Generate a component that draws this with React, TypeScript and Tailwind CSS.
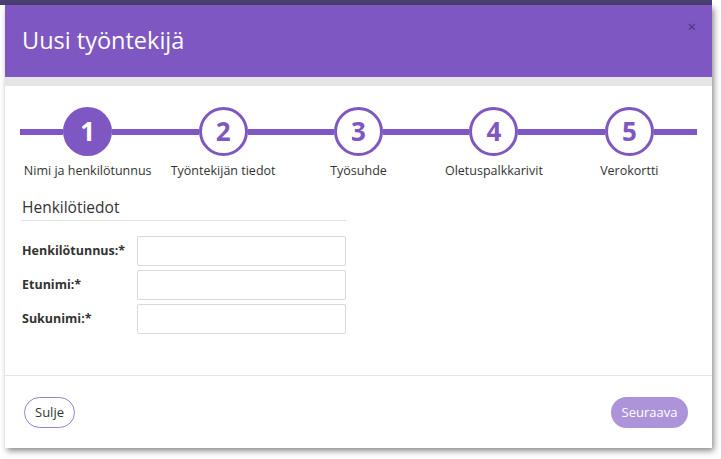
import React from "react";

const steps = [
  "Nimi ja henkilötunnus",
  "Työntekijän tiedot",
  "Työsuhde",
  "Oletuspalkkarivit",
  "Verokortti",
];

const fields = ["Henkilötunnus:*", "Etunimi:*", "Sukunimi:*"];

export default function App() {
  return (
    <div
      className="h-[459px] w-[721px] bg-white overflow-hidden"
      style={{ fontFamily: '"Open Sans", "Noto Sans", sans-serif' }}
    >
      <div className="h-[5px] w-[712px] bg-[#4b3f70]" />
      <div className="relative ml-[5px] w-[707px] bg-white shadow-[2px_3px_6px_rgba(0,0,0,0.45)]">
        {/* header */}
        <div className="flex h-[72px] items-center bg-[#7e57c2] px-[17px]">
          <h1 className="text-[23.5px] leading-none font-normal text-white">Uusi työntekijä</h1>
        </div>
        <button className="absolute right-[16px] top-[14px] text-[15px] leading-none text-[#4a2f7e]">
          ×
        </button>
        <div className="h-[9px] bg-[#e5e5e5]" />

        {/* body */}
        <div className="pt-[21px] pb-[41px]">
          <div className="flex px-[15px]">
            {steps.map((label, i) => (
              <div key={label} className="flex flex-1 flex-col items-center">
                <div className="flex w-full items-center">
                  <div className="h-[6px] flex-1 bg-[#7e57c2]" />
                  {i === 0 ? (
                    <div className="flex h-[49px] w-[49px] items-center justify-center rounded-full bg-[#7e57c2] text-[26px] font-bold text-white">
                      {i + 1}
                    </div>
                  ) : (
                    <div className="flex h-[49px] w-[49px] items-center justify-center rounded-full border-[3px] border-[#7e57c2] bg-white text-[26px] font-bold text-[#7e57c2]">
                      {i + 1}
                    </div>
                  )}
                  <div className="h-[6px] flex-1 bg-[#7e57c2]" />
                </div>
                <div className="mt-[6px] text-[12.5px] leading-[18px] text-[#333]">{label}</div>
              </div>
            ))}
          </div>

          <div className="ml-[17px] mt-[16px] w-[324px]">
            <div className="border-b border-[#e3e3e3] pb-[2px] text-[15.5px] leading-[22px] text-[#333]">
              Henkilötiedot
            </div>
            <div className="mt-[15px] flex flex-col gap-[4px]">
              {fields.map((f) => (
                <div key={f} className="flex items-center">
                  <label className="w-[115px] text-[12.5px] font-bold text-[#333]">{f}</label>
                  <input
                    className="h-[30px] w-[209px] rounded-[2px] border border-[#d9d9d9] bg-white outline-none"
                    type="text"
                  />
                </div>
              ))}
            </div>
          </div>
        </div>

        {/* footer */}
        <div className="flex items-center justify-between border-t border-[#e5e5e5] pl-[19px] pr-[24px] pt-[21px] pb-[20px]">
          <button className="h-[31px] w-[51px] rounded-full border border-[#9a7fd4] text-[13px] text-[#333]">
            Sulje
          </button>
          <button className="h-[31px] w-[77px] rounded-full bg-[#ad93d9] text-[13px] text-white">
            Seuraava
          </button>
        </div>
      </div>
    </div>
  );
}
